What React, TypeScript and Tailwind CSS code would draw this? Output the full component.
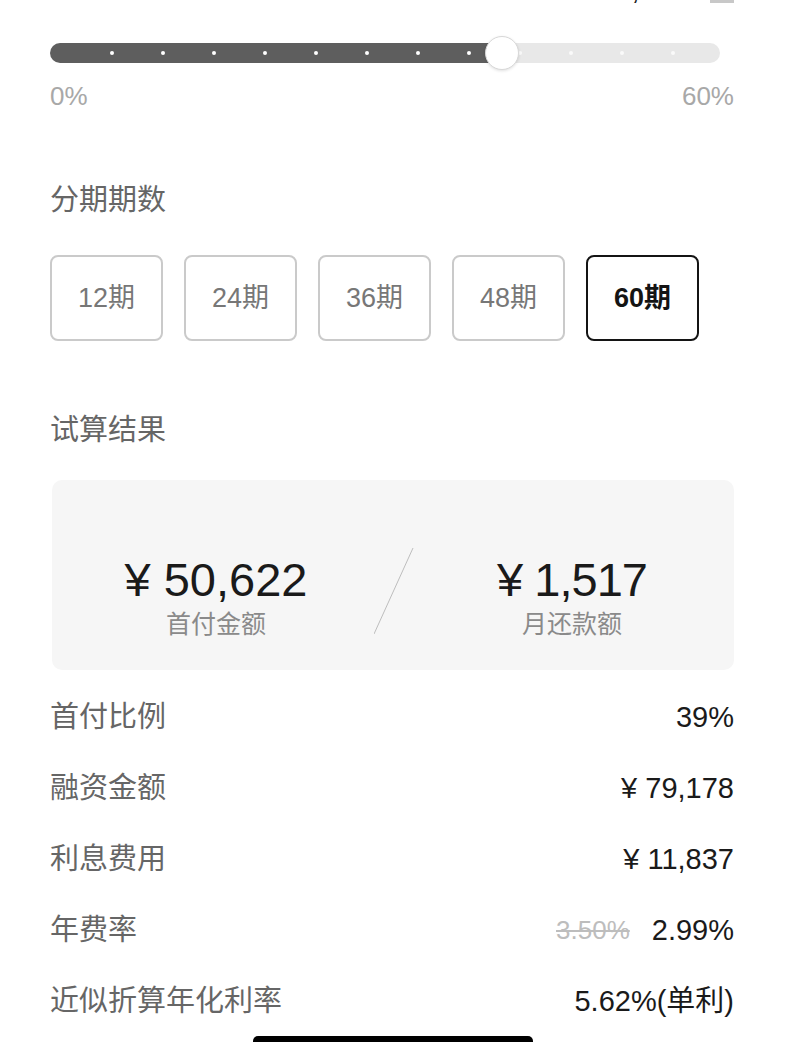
const font = "font-['Liberation_Sans','Noto_Sans_CJK_SC',sans-serif]";

const periods = [12, 24, 36, 48, 60];
const selected = 60;

const rows = [
  { label: "首付比例", value: "39%" },
  { label: "融资金额", value: "¥ 79,178" },
  { label: "利息费用", value: "¥ 11,837" },
];

function Slider() {
  const dots = Array.from({ length: 12 }, (_, i) => i);
  return (
    <div className="mt-[31px] h-[36px] w-[670px] flex items-center relative">
      <div className="w-full h-[20px] flex rounded-full overflow-hidden relative">
        <div className="w-[452px] h-full bg-[#5e5e5e]" />
        <div className="flex-1 h-full bg-[#e8e8e8]" />
        {/* tick dots */}
        <div className="absolute inset-0 flex items-center pl-[60px] gap-[47px]">
          {dots.map((i) => (
            <div
              key={i}
              className={
                i < 8
                  ? "w-[4px] h-[4px] rounded-full bg-white"
                  : "w-[4px] h-[4px] rounded-full bg-[#fafafa]"
              }
            />
          ))}
        </div>
      </div>
      {/* thumb */}
      <div className="absolute left-[435px] top-[1px] w-[34px] h-[34px] rounded-full bg-white border border-[#d8d8d8] shadow-[0_1px_3px_rgba(0,0,0,0.12)]" />
    </div>
  );
}

export default function App() {
  return (
    <div className={`w-[786px] h-[1042px] bg-white overflow-hidden relative pl-[50px] pr-[52px] ${font}`}>
      {/* previous row, cut at the top */}
      <div className="h-[4px] overflow-hidden flex items-end justify-end">
        <span className="text-[29px] leading-none text-[#1a1a1a] mr-[22px]">¥ 30,000</span>
        <div className="self-start w-[24px] h-[3px] bg-[#c8c8c8]" />
      </div>

      <Slider />

      <div className="mt-[10px] flex justify-between text-[26px] leading-[30px] text-[#a8a8a8]">
        <span>0%</span>
        <span>60%</span>
      </div>

      <div className="mt-[72px] text-[29px] leading-[34px] text-[#666]">分期期数</div>

      <div className="mt-[38px] flex gap-[21px]">
        {periods.map((p) => (
          <div
            key={p}
            className={
              p === selected
                ? "w-[113px] h-[86px] rounded-[8px] border-2 border-[#141414] flex items-center justify-center text-[27px] font-bold text-[#141414]"
                : "w-[113px] h-[86px] rounded-[8px] border-2 border-[#cacaca] flex items-center justify-center text-[27px] text-[#777]"
            }
          >
            {p}期
          </div>
        ))}
      </div>

      <div className="mt-[72px] text-[29px] leading-[34px] text-[#666]">试算结果</div>

      <div className="mt-[33px] ml-[2px] h-[190px] rounded-[10px] bg-[#f6f6f6] flex">
        <div className="flex-1 flex flex-col items-center pt-[74px] pl-[6px]">
          <div className="text-[47px] leading-[52px] text-[#1a1a1a]">¥ 50,622</div>
          <div className="mt-[3px] text-[25px] leading-[30px] text-[#8a8a8a]">首付金额</div>
        </div>
        <svg width="40" height="190" viewBox="0 0 40 190" className="shrink-0">
          <line x1="39" y1="68" x2="0" y2="154" stroke="#bdbdbd" strokeWidth="1" />
        </svg>
        <div className="flex-1 flex flex-col items-center pt-[74px] pr-[4px]">
          <div className="text-[47px] leading-[52px] tracking-[-1px] text-[#1a1a1a]">¥ 1,517</div>
          <div className="mt-[3px] text-[25px] leading-[30px] text-[#8a8a8a]">月还款额</div>
        </div>
      </div>

      <div className="mt-[12px] flex flex-col">
        {rows.map((r) => (
          <div key={r.label} className="h-[71px] flex items-center justify-between">
            <span className="text-[29px] text-[#666]">{r.label}</span>
            <span className="text-[29px] text-[#1a1a1a]">{r.value}</span>
          </div>
        ))}
        <div className="h-[71px] flex items-center justify-between">
          <span className="text-[29px] text-[#666]">年费率</span>
          <div className="flex items-center gap-[22px]">
            <span className="text-[26px] text-[#bdbdbd] line-through">3.50%</span>
            <span className="text-[29px] text-[#1a1a1a]">2.99%</span>
          </div>
        </div>
        <div className="h-[71px] flex items-center justify-between">
          <span className="text-[29px] text-[#666]">近似折算年化利率</span>
          <span className="text-[29px] text-[#1a1a1a]">5.62%(单利)</span>
        </div>
      </div>

      {/* home indicator */}
      <div className="absolute left-[253px] top-[1036px] w-[280px] h-[10px] rounded-full bg-black" />
    </div>
  );
}
